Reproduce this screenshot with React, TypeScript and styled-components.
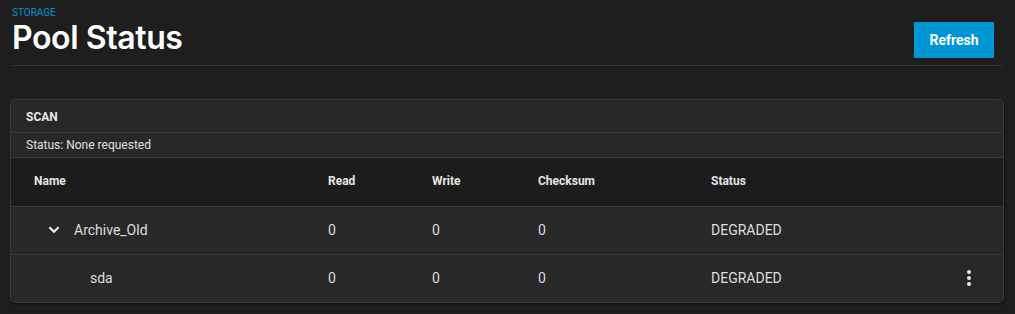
import React from 'react';
import styled, { createGlobalStyle } from 'styled-components';

const GlobalStyle = createGlobalStyle`
  html, body {
    margin: 0;
    padding: 0;
    background: #1e1e1e;
  }
  body {
    font-family: Roboto, "Liberation Sans", sans-serif;
    color: #e6e6e6;
  }
`;

const Page = styled.div`
  width: 1015px;
  height: 314px;
  box-sizing: border-box;
  padding: 0 10px 0 10px;
  background: #1e1e1e;
`;

const Header = styled.div`
  display: flex;
  justify-content: space-between;
  align-items: flex-start;
  margin: 0 2px;
  height: 66px;
  box-sizing: border-box;
  border-bottom: 1px solid #393939;
`;

const TitleBlock = styled.div`
  display: flex;
  flex-direction: column;
`;

const Crumb = styled.div`
  margin-top: 7px;
  font-size: 10px;
  line-height: 12px;
  color: #0095d5;
  font-family: Roboto, sans-serif;
`;

const Title = styled.h1`
  margin: 0;
  font-family: Inter, Roboto, sans-serif;
  font-size: 32px;
  line-height: 38px;
  font-weight: 600;
  letter-spacing: -0.4px;
  color: #ffffff;
`;

const RefreshButton = styled.button`
  margin-top: 22px;
  margin-right: 9px;
  width: 80px;
  height: 36px;
  border: none;
  border-radius: 0;
  background: #0095d5;
  color: #ffffff;
  font-family: Roboto, sans-serif;
  font-weight: 700;
  font-size: 14px;
  cursor: pointer;
`;

const Card = styled.div`
  margin-top: 33px;
  width: 994px;
  box-sizing: border-box;
  background: #282828;
  border: 1px solid #393939;
  border-radius: 5px;
  box-shadow: 1px 2px 2px rgba(0, 0, 0, 0.35);
  overflow: hidden;
`;

const SectionTitle = styled.div`
  height: 31px;
  display: flex;
  align-items: center;
  padding: 1px 15px 0;
  font-size: 12px;
  font-weight: 700;
  color: #e8e8e8;
  border-bottom: 1px solid #393939;
`;

const StatusLine = styled.div`
  height: 24px;
  display: flex;
  align-items: center;
  padding: 0 15px;
  font-size: 12px;
  color: #e0e0e0;
`;

const Row = styled.div<{ $head?: boolean }>`
  display: grid;
  grid-template-columns: 294px 104px 106px 173px 1fr 60px;
  align-items: center;
  box-sizing: border-box;
  height: ${({ $head }) => ($head ? '49px' : '48px')};
  padding: 0 0 2px 23px;
  background: ${({ $head }) => ($head ? '#1c1c1c' : '#282828')};
  border-top: 1px solid #393939;
  font-size: ${({ $head }) => ($head ? '12px' : '14px')};
  font-weight: ${({ $head }) => ($head ? 700 : 400)};
  color: ${({ $head }) => ($head ? '#e4e4e4' : '#dedede')};
`;

const NameCell = styled.div<{ $depth: number }>`
  display: flex;
  align-items: center;
  padding-left: ${({ $depth }) => ($depth === 0 ? 14 : 56)}px;
`;

const Toggle = styled.span`
  display: inline-flex;
  width: 12px;
  margin-right: 14px;
  color: #f0f0f0;
`;

const Actions = styled.div`
  display: flex;
  justify-content: flex-start;
  padding-left: 23px;
`;

const Kebab = () => (
  <svg width="6" height="18" viewBox="0 0 6 18">
    <circle cx="3" cy="3" r="2" fill="#e8e8e8" />
    <circle cx="3" cy="9" r="2" fill="#e8e8e8" />
    <circle cx="3" cy="15" r="2" fill="#e8e8e8" />
  </svg>
);

const Chevron = () => (
  <svg width="12" height="8" viewBox="0 0 12 8">
    <path d="M1.4 1.2 6 5.8 10.6 1.2" stroke="#f0f0f0" strokeWidth="2.2" fill="none" />
  </svg>
);

const rows = [
  { name: 'Archive_Old', depth: 0, read: 0, write: 0, checksum: 0, status: 'DEGRADED' },
  { name: 'sda', depth: 1, read: 0, write: 0, checksum: 0, status: 'DEGRADED' },
];

const App = () => (
  <Page>
    <GlobalStyle />
    <Header>
      <TitleBlock>
        <Crumb>STORAGE</Crumb>
        <Title>Pool Status</Title>
      </TitleBlock>
      <RefreshButton>Refresh</RefreshButton>
    </Header>
    <Card>
      <SectionTitle>SCAN</SectionTitle>
      <StatusLine>Status: None requested</StatusLine>
      <Row $head>
        <div>Name</div>
        <div>Read</div>
        <div>Write</div>
        <div>Checksum</div>
        <div>Status</div>
        <div />
      </Row>
      {rows.map((r) => (
        <Row key={r.name}>
          <NameCell $depth={r.depth}>
            {r.depth === 0 && (
              <Toggle>
                <Chevron />
              </Toggle>
            )}
            {r.name}
          </NameCell>
          <div>{r.read}</div>
          <div>{r.write}</div>
          <div>{r.checksum}</div>
          <div>{r.status}</div>
          <Actions>{r.depth > 0 && <Kebab />}</Actions>
        </Row>
      ))}
    </Card>
  </Page>
);

export default App;
